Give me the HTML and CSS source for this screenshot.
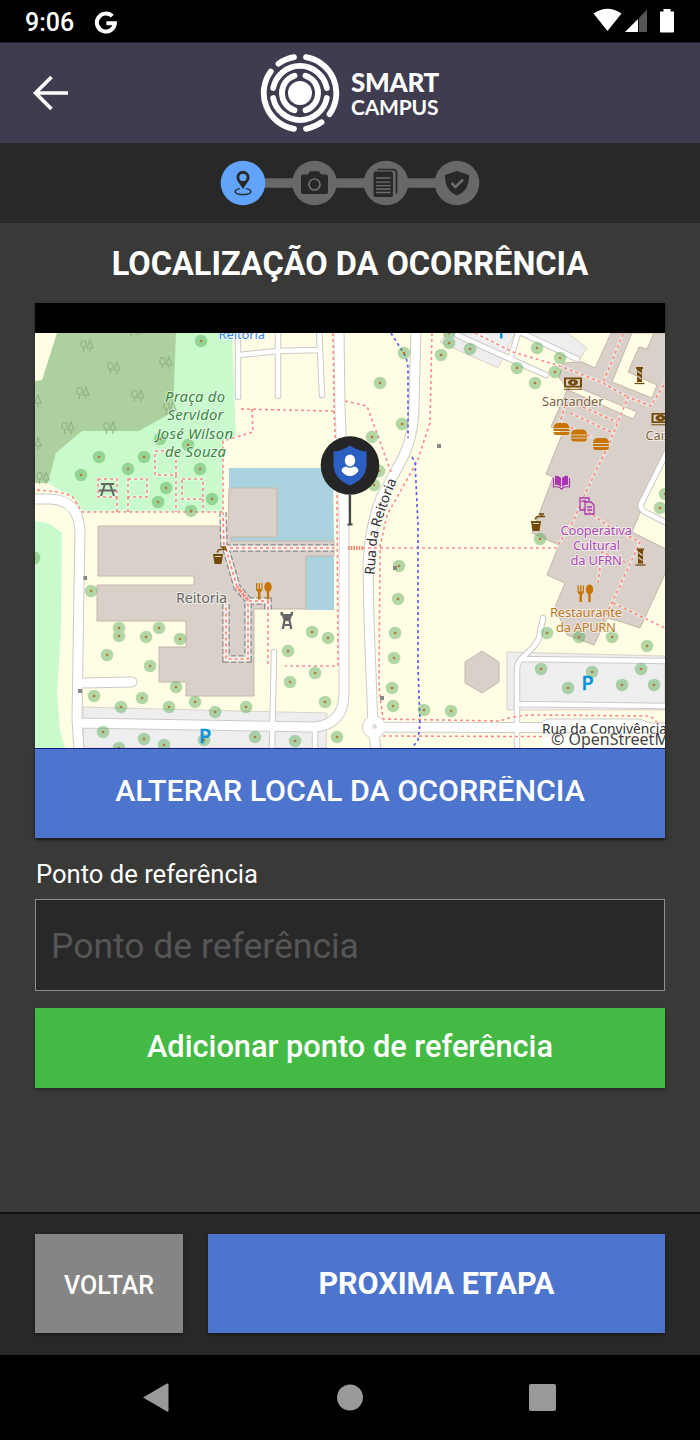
FILE: index.html
```html
<!DOCTYPE html>
<html lang="pt-BR">
<head>
<meta charset="utf-8">
<title>Smart Campus</title>
<link rel="stylesheet" href="styles.css">
</head>
<body>
<div class="status">
  <span class="clock">9:06</span>
  <svg class="google" width="24" height="24" viewBox="0 0 24 24"><path d="M18.300 6.200A9 9 0 1 0 20.900 13.200H12.400" fill="none" stroke="#fff" stroke-width="4"/></svg>
  <svg class="signals" width="84" height="26" viewBox="592 9 84 26">
    <path d="M593.5 14.5Q607.500 5 621.500 14.500L607.500 32Z" fill="#fff"/>
    <path d="M638 20V33H625Z" fill="#fff"/><path d="M639 19L647 10.500V33H639Z" fill="#555"/>
    <path d="M660 12.500h3.500V10h7v2.500H674V32.500q0 1-1 1h-12q-1 0-1-1z" fill="#fff"/>
  </svg>
</div>
<header class="header">
  <svg class="back" width="38" height="38" viewBox="0 0 38 38" fill="none" stroke="#fff" stroke-width="3.600"><path d="M37 19H4M20.500 3L4.500 19L20.500 35"/></svg>
  <svg class="mark" width="80" height="80" viewBox="-40 -40 80 80" fill="none" stroke="#fff" stroke-width="5.800" stroke-linecap="round">
    <circle r="12" fill="#fff" stroke="none"/>
    <path d="M5.500 -17.300A18.200 18.200 0 0 1 5.500 17.300M-5.500 -17.300A18.200 18.200 0 0 0 -5.500 17.300"/>
    <path d="M-26.800 -5A27.300 27.300 0 0 1 26.800 -5M-26.800 5A27.300 27.300 0 0 0 26.800 5"/>
    <path d="M6 -35.800A36.300 36.300 0 0 1 29.500 21.200M-29.200 -21.500A36.300 36.300 0 0 0 -6 35.800M-21.500 -29.200Q-15 -34.200 -6 -35.800M6 35.800Q14.500 34.200 21.500 29.200"/>
  </svg>
  <div class="brand"><b>SMART</b><span>CAMPUS</span></div>
</header>
<nav class="steps">
  <svg width="260" height="46" viewBox="220 160 260 46">
    <path d="M243 183H457" stroke="#686867" stroke-width="9.500"/>
    <circle cx="243" cy="183" r="22.300" fill="#62a4fb"/>
    <circle cx="314.500" cy="183" r="22.300" fill="#686867"/><circle cx="386" cy="183" r="22.300" fill="#686867"/><circle cx="457" cy="183" r="22.300" fill="#686867"/>
    <g fill="#282828">
      <path fill-rule="evenodd" d="M243 189C240 184 236.500 181 236.500 177.300A6.500 6.500 0 0 1 249.500 177.300C249.500 181 246 184 243 189ZM243 173.700A3.700 3.700 0 1 0 243 181.100A3.700 3.700 0 1 0 243 173.700Z"/>
      <path d="M240 188.600C234 189.500 233.500 193 239 194.200Q243 195 247 194.200C252.500 193 252 189.500 246 188.600" fill="none" stroke="#282828" stroke-width="1.400"/>
      <path d="M303 174.500h5l2-3.200h9l2 3.200h5q2 0 2 2v15.500q0 2-2 2h-23q-2 0-2-2v-15.500q0-2 2-2z"/>
      <path d="M377.500 169.500H393q3.500 0 3.500 3.500V193.500" fill="none" stroke="#282828" stroke-width="1.700"/>
      <rect x="373.500" y="171.500" width="19.500" height="25.500" rx="2"/>
      <path d="M457 171L469 175C469 185 466 192 457 195.500C448 192 445 185 445 175Z"/>
    </g>
    <g fill="none" stroke="#6e6e6c"><circle cx="314.500" cy="184.500" r="5.500" stroke-width="1.700"/>
      <path d="M376 178h14.500M376 182.200h14.500M376 185.600h14.500M376 189h14.500M376 192.500h14.500" stroke-width="1.300"/>
      <path d="M451.500 183l4 4 7.500-7.500" stroke-width="2.500"/></g>
  </svg>
</nav>
<main class="content">
  <h1>LOCALIZAÇÃO DA OCORRÊNCIA</h1>
  <section class="mapcard">
  <svg class="map" width="630" height="415" viewBox="35 333 630 415">
    <defs>
      <g id="wood" fill="none" stroke="#8fb283" stroke-width="1.100"><ellipse cx="-3.500" cy="-2" rx="2.700" ry="3.500"/><path d="M-3.500 1.500V6M3 -6L0 2H6ZM3 2V6"/></g>
      <g id="burger" fill="#c77400"><path d="M-8 -1Q-7.500 -6 -3 -6H3Q7.500 -6 8 -1Z"/><rect x="-8" y="0" width="16" height="2"/><path d="M-8 3H8Q8 6 5 6H-5Q-8 6-8 3Z"/></g>
      <g id="bank"><rect x="-9" y="-6" width="18" height="10" fill="#734a08"/><rect x="-7" y="-4.300" width="14" height="6.600" fill="#d9d0c9"/><ellipse cy="-1" rx="5" ry="3.200" fill="#734a08"/><circle cy="-1" r="1.200" fill="#d9d0c9"/><path d="M-9 5.800H9" stroke="#734a08"/></g>
      <g id="pillar" fill="#734a08"><path d="M-3.500 -9H3.500V-7H2.500V6H-2.500V-7H-3.500Z"/><path d="M-5 7.500H5" stroke="#734a08" stroke-width="1.300"/><path d="M-2 -5L2 -2M-2 0L2 3" stroke="#d9d0c9" stroke-width="1.500"/></g>
      <g id="eat" fill="#c77400"><path d="M-8 -8V-2Q-8 0-6 1V8.500H-3.500V1Q-1.500 0-1.500-2V-8H-2.700V-2H-4V-8H-5.400V-2H-6.700V-8Z"/><ellipse cx="4" cy="-4" rx="3.700" ry="5"/><path d="M2.800 0H5.200V8.500H2.800Z"/></g>
      <g id="water"><path d="M-6 0H4L2.500 10H-4.500Z" fill="#734a08"/><path d="M-4 2.500H2" stroke="#d9d0c9" stroke-width="1"/><path d="M-1.500 -1.500Q-1.500 -4.500 1.500 -4.500H8M4.500 -4.500V-7M2 -7H7" fill="none" stroke="#734a08" stroke-width="1.700"/></g>
      <path id="trees" d="M201 341h.1M99 457h.1M144 457h.1M128 469h.1M81 475h.1M160 439h.1M188 445h.1M200 469h.1M166 488h.1M158 502h.1M212 499h.1M191 511h.1M404 353h.1M441 355h.1M449 343h.1M449 333h.1M380 383h.1M402 424h.1M372 437h.1M379 471h.1M374 485h.1M470 349h.1M517 368h.1M537 348h.1M560 358h.1M555 372h.1M535 383h.1M665 494h.1M660 508h.1M34 558h.1M91 591h.1M119 628h.1M119 636h.1M159 628h.1M146 637h.1M180 639h.1M107 655h.1M150 666h.1M94 696h.1M121 707h.1M142 698h.1M176 687h.1M169 707h.1M195 702h.1M215 712h.1M246 707h.1M103 732h.1M144 739h.1M164 745h.1M119 748h.1M204 740h.1M312 632h.1M328 638h.1M288 651h.1M290 682h.1M315 673h.1M325 702h.1M255 737h.1M295 741h.1M337 737h.1M399 566h.1M398 599h.1M395 633h.1M394 658h.1M392 688h.1M393 706h.1M424 710h.1M451 711h.1M540 539h.1M547 633h.1M579 637h.1M612 637h.1M647 646h.1M541 669h.1M568 688h.1M592 672h.1M641 669h.1M622 685h.1M654 685h.1"/>
      <g id="minor"><path d="M238 328V397M239 355L278 351L318 350M278 328V396M319 328L322 395M274 652L272 750M315 727V750M457 335L546 375M519 330L511 357M522 333L577 359M543 618L539 638Q536 646 522 658Q517 663 517 670V750M522 659L667 661M517 704L667 706M667 452L641 504Q640 509 645 512L667 523"/></g>
      <g id="major"><path d="M30 499H50Q79 500 80 532L79 587L77 720L79 750M82 683L132 682M339 328L340 405L344 520V695Q343 724 315 727L79 723M416 328L414 405Q414 438 400 463L381 498Q370 525 368 563L369 620L373 727L376 750M374 727L670 728"/></g>
      <path id="foot" d="M333 333L334 405L337 495L338 666H285M334 411L238 409M252 409L253 432L223 441V512H82L72 496Q60 491 35 490M345 401L367 406L391 472M432 333L430 423L417 462L387 515L380 547L379 687L383 719L500 721Q515 715 537 715L650 716L658 723M383 736L665 737M362 548H556L573 522L583 498L610 442L628 397L651 406L665 383M98 479H117V497H98ZM117 497V512M128 479H147V497H128ZM128 497V512M155 451H176V475H155ZM176 475V512M182 479H203V499H182ZM203 499V512M475 333L513 352L560 366L603 383L628 397M623 334L603 383M583 407L617 422M570 413L613 433M565 405L560 423L572 428L592 437M583 508L607 525L640 542L610 607L603 620M613 603L665 628M598 583L602 552L625 562M268 601V666"/>
      <path id="indoor" d="M223 512L224 548H334M226 549L237 587L248 600V659H226V602M249 601H268V610"/>
      <path id="rua" d="M374.500 575L377 540Q382 515 401 470"/>
    </defs>
    <rect x="35" y="333" width="630" height="415" fill="#fffee5"/>
    <path d="M57 333H232L236 436L223 441V512H82L72 497L48 483L56 453ZM35 521L48 523L62 533L61 630L57 693L60 730L65 748H35Z" fill="#c8facc"/>
    <path d="M57 333H176L173 412L139 431H82L56 453L48 483H35V381L42 380Z" fill="#add19e"/>
    <g><use href="#wood" x="87" y="346"/><use href="#wood" x="114" y="368"/><use href="#wood" x="166" y="363"/><use href="#wood" x="83" y="393"/><use href="#wood" x="138" y="396"/><use href="#wood" x="68" y="428"/><use href="#wood" x="110" y="428"/><use href="#wood" x="35" y="401"/><use href="#wood" x="35" y="444"/><use href="#wood" x="43" y="478"/><use href="#wood" x="135" y="331"/><use href="#wood" x="170" y="408"/></g>
    <path d="M83 707L240 711L327 713L326 748H83ZM447 333L440 342L498 368L515 333ZM515 333H568L587 348L578 362ZM507 652L665 656V710H507Z" fill="#eee" stroke="#d5c8c0" stroke-width=".8"/>
    <path d="M229 468H333L334 541H229ZM306 556H334V610H306Z" fill="#aad3df"/>
    <g fill="#d9d0c9" stroke="#c4b6ab" stroke-width="1">
      <path d="M98 526H228L229 488H277V537H231V541H334V556H306V609H254V696H186V682H159V647H186V621H97V585H194V576H98Z"/>
      <path d="M611 333H666V450L632 532L666 549V572L640 628L619 621L607 618L594 645L567 635L555 607L565 583L547 575L559 545L532 533L553 477L546 474L563 432L551 427L568 388L559 378L563 363L582 362L595 368Z"/>
      <path d="M482 651L499 662V682L482 693L465 683V662Z"/>
      <path d="M632 333L612 382L652 398L657 385L628 372L639 347L647 349L654 333ZM572 385L637 412L633 419L568 390Z" fill="#fffee5"/>
    </g>
    <g fill="none" stroke-linecap="round" stroke-linejoin="round">
      <use href="#minor" stroke="#cdc9c9" stroke-width="6.500"/><use href="#major" stroke="#cdc9c9" stroke-width="11"/>
      <circle cx="374" cy="727" r="11.500" fill="#fff" stroke="#cdc9c9"/>
      <path d="M540 725Q543 719 550 719H635Q646 719 650 725" fill="#fff" stroke="#cdc9c9"/>
      <use href="#minor" stroke="#fff" stroke-width="4.500"/><use href="#major" stroke="#fff" stroke-width="9"/>
      <circle cx="374.500" cy="726.500" r="1.700" stroke="#bbb"/>
    </g>
    <g fill="none">
      <use href="#indoor" stroke="#888" stroke-width="7.500" stroke-dasharray="5 2.500"/><use href="#indoor" stroke="#f4efeb" stroke-width="5"/>
      <use href="#indoor" stroke="#fa8072" stroke-width="1.600" stroke-dasharray="3 3"/>
      <use href="#foot" stroke="#fff" stroke-opacity=".4" stroke-width="3.500"/>
      <use href="#foot" stroke="#fa8072" stroke-opacity=".9" stroke-width="1.600" stroke-dasharray="3 3"/>
      <path d="M237 587L248 600M348 548H364" stroke="#fa8072" stroke-width="4" stroke-dasharray="1.500 1.200"/>
      <path d="M391 333L406 357L408 367V438M412 457L415 462L418 525V667L420 723L418 740L412 748" stroke="#5d5df0" stroke-width="1.700" stroke-dasharray="3 3"/>
      <use href="#trees" stroke="#58aa58" stroke-opacity=".46" stroke-width="12.500" stroke-linecap="round"/>
      <use href="#trees" stroke="#b27936" stroke-width="2.600" stroke-linecap="round"/>
    </g>
    <path d="M83.500 576h3.500v4h-3.500zM78 689h4v4h-4zM437 444h4v4h-4zM380 696h4v4h-4zM393 566h4v4h-4z" fill="#888"/>
    <path d="M101 484H114M99 490.500H116M105 484L101 496M110 484L114 496" stroke="#666" stroke-width="2" fill="none"/>
    <path fill-rule="evenodd" d="M280.500 612H283V614H290.500V612H293V615.500H292L290.500 620L292.500 629H290L289.500 626H284.500L284 629H281.500L283.500 620L281.800 615.500H280.500ZM285.500 621L285 624H289L288.500 621Z" fill="#666"/>
    <use href="#water" x="219" y="554"/><use href="#water" x="537" y="521"/>
    <use href="#eat" x="264" y="591"/><use href="#eat" x="585.500" y="593.500"/>
    <use href="#burger" x="561.500" y="429"/><use href="#burger" x="579" y="435.500"/><use href="#burger" x="601" y="444"/>
    <use href="#bank" x="573" y="383.500"/><use href="#bank" x="660.500" y="419"/><use href="#pillar" x="639.500" y="376"/><use href="#pillar" x="640.500" y="557.500"/>
    <g fill="#a936b0"><path d="M555 476Q558 475 561 478V487Q558 484 555 485ZM568 476Q565 475 562 478V487Q565 484 568 485Z"/><path d="M553.500 478V487Q559 486 561.500 489Q564 486 569.500 487V478" fill="none" stroke="#a936b0" stroke-width="1.200"/><path d="M585 510H580V498H589V501M585 502H591L594 505V514H585ZM587 507H592M587 510H592M582 501H586" fill="none" stroke="#a936b0" stroke-width="1.300"/></g>
    <g class="label">
      <g fill="#36873b" font-style="italic" font-size="14.800"><text x="165" y="402" textLength="60">Praça do</text><text x="167.500" y="420" textLength="56">Servidor</text><text x="156.500" y="438.500" textLength="76.500">José Wilson</text><text x="165" y="456.500" textLength="61">de Souza</text></g>
      <text x="176" y="602.500" textLength="51" font-size="14.300" fill="#666">Reitoria</text>
      <text x="218.500" y="339" textLength="46.500" font-size="13" fill="#3b86f0">Reitoria</text>
      <g font-size="12.800" fill="#806238"><text x="542" y="406" textLength="61.500">Santander</text><text x="645.500" y="440">Caixa</text></g>
      <g font-size="13" fill="#ad49b5"><text x="560.500" y="535" textLength="71.500">Cooperativa</text><text x="573" y="550" textLength="47">Cultural</text><text x="570.500" y="565" textLength="51.500">da UFRN</text></g>
      <g font-size="13" fill="#bf781d"><text x="550" y="617" textLength="72">Restaurante</text><text x="556" y="632" textLength="60">da APURN</text></g>
      <text font-size="13.800" fill="#333"><textPath href="#rua" textLength="98">Rua da Reitoria</textPath></text>
      <text x="542" y="734" textLength="125" font-size="13.800" fill="#333">Rua da Convivência</text>
    </g>
    <path d="M501.300 333V338.500" stroke="#0092da" stroke-width="2.400"/>
    <g class="parking"><text x="199" y="742.500">P</text><text x="581.500" y="690">P</text></g>
    <path d="M543 733.500H665V748H543Z" fill="#fff" opacity=".75"/>
    <text class="credit" x="551" y="745">© OpenStreetMap</text>
    <path d="M350 495V524M347.500 524.500H352.500" stroke="#444" stroke-width="2.200"/>
    <circle cx="350" cy="465.500" r="29.300" fill="#252525"/>
    <path d="M350 445.500Q358 451 366.500 451.500V465Q366 479 350 485.500Q334 479 333.500 465V451.500Q342 451 350 445.500Z" fill="#2b60c2"/>
    <ellipse cx="350" cy="460.500" rx="5.200" ry="6" fill="#fff"/><path d="M341.500 471Q342 467 346 466.500Q350 469 354 466.500Q358 467 358.500 471Q355 476 350 476Q345 476 341.500 471Z" fill="#fff"/>
  </svg>
  <button class="btn change"><span>ALTERAR LOCAL DA OCORRÊNCIA</span></button>
  </section>
  <label class="fieldlabel" for="ref">Ponto de referência</label>
  <input class="field" id="ref" placeholder="Ponto de referência">
  <button class="btn add"><span>Adicionar ponto de referência</span></button>
</main>
<footer class="footer">
  <button class="btn voltar"><span>VOLTAR</span></button>
  <button class="btn next"><span>PROXIMA ETAPA</span></button>
</footer>
<div class="sysnav">
  <svg width="420" height="32" viewBox="140 1382 420 32" fill="#999"><path d="M143 1397.500L167 1383.500Q168.500 1383 168.500 1384.500V1410.500Q168.500 1412.500 167 1411.500Z"/><circle cx="350" cy="1397.500" r="13"/><rect x="529" y="1384" width="27" height="27" rx="2"/></svg>
</div>
</body>
</html>
```
FILE: styles.css
```css
* { box-sizing: border-box; }
body { margin: 0; width: 700px; height: 1440px; display: flex; flex-direction: column; background: #393937; color: #fff; font-family: Roboto, sans-serif; overflow: hidden; }
svg { display: block; }
.status { height: 42px; background: #000; display: flex; align-items: center; padding: 0 24px 0 25px; }
.clock { font-size: 25px; font-weight: 500; width: 69px; padding-top: 3px; }
.google { margin-top: 1px; }
.signals { margin-left: auto; }
.header { height: 101px; background: #403c50; border-top: 1px solid #1d1b2b; display: flex; align-items: center; padding-left: 31px; }
.mark { margin-left: 191px; }
.brand { margin-left: 11px; display: flex; flex-direction: column; font-family: Lato, sans-serif; padding-top: 3px; }
.brand b { font-size: 26px; line-height: 25px; font-weight: 900; letter-spacing: -.3px; }
.brand span { font-size: 21px; line-height: 24px; font-weight: 700; letter-spacing: -.2px; }
.steps { height: 80px; background: #282828; display: flex; align-items: center; justify-content: center; }
.content { height: 989px; display: flex; flex-direction: column; padding: 0 35px; }
h1 { margin: 0; height: 80px; line-height: 83px; text-align: center; font-size: 32.5px; font-weight: 700; white-space: nowrap; }
.mapcard { padding-top: 30px; background: #000; box-shadow: 0 1px 3px rgba(0,0,0,.4); }
.label { font-family: "Noto Sans", sans-serif; paint-order: stroke; stroke: rgba(255,255,255,.6); stroke-width: 2px; stroke-linejoin: round; }
.parking { font: 500 20px "Noto Sans", sans-serif; fill: #0092da; stroke: #0092da; stroke-width: .5px; }
.credit { font: 16px "Noto Sans", sans-serif; fill: #444; }
.btn { display: flex; align-items: center; justify-content: center; border: 0; padding: 0; color: #fff; font-family: Roboto, sans-serif; box-shadow: 0 2px 3px rgba(0,0,0,.35); white-space: nowrap; }
.change { width: 100%; height: 90px; background: #4d75cd; border-top: 1px solid #10207a; font-size: 30.4px; font-weight: 500; padding-bottom: 6px; }
.change span { line-height: 30px; overflow: hidden; }
.fieldlabel { height: 61px; line-height: 73px; padding-left: 1px; font-size: 25.6px; }
.field { height: 92px; background: #282828; border: 1px solid #8d8d8d; padding: 2px 15px 0; font: 35.5px Roboto, sans-serif; color: #fff; outline: 0; border-radius: 0; }
.field::placeholder { color: #565656; opacity: 1; }
.add { height: 80px; margin-top: 17px; background: #43ba43; font-size: 30.75px; font-weight: 500; padding-bottom: 4px; }
.footer { height: 143px; background: #282828; border-top: 2px solid #111; display: flex; gap: 25px; padding: 20px 35px 0; }
.voltar { width: 148px; height: 99px; background: #858585; font-size: 25px; font-weight: 500; padding-top: 3px; }
.next { flex: 1; height: 99px; background: #4d75cd; font-size: 30.5px; font-weight: 700; }
.sysnav { height: 85px; background: #000; display: flex; align-items: center; justify-content: center; }
```
